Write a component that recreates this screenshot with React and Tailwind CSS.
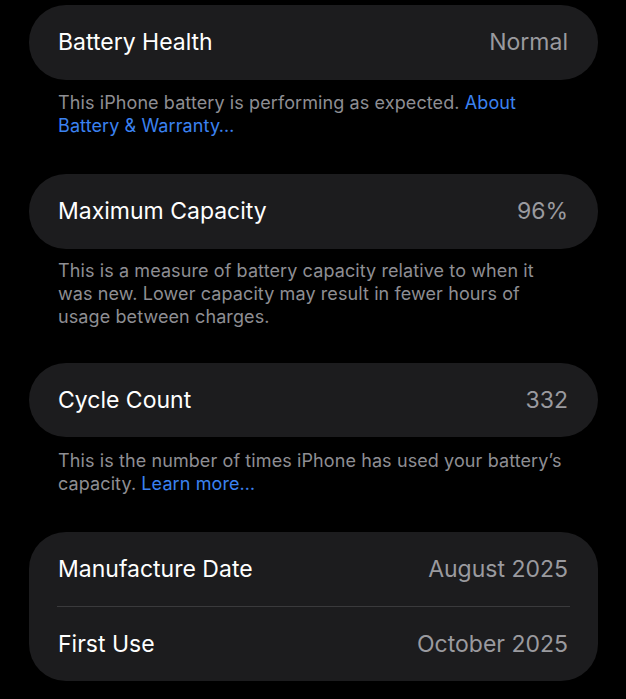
import React from "react";

const font = { fontFamily: "Inter, 'Noto Sans', sans-serif" };

function Row({ label, value, h = "h-[74px]" }) {
  return (
    <div className={`flex ${h} items-center justify-between pl-[29px] pr-[30px]`}>
      <span className="text-[23px] text-white tracking-[0px]">{label}</span>
      <span className="text-[23px] text-[#9a9a9f] tracking-[0px]">{value}</span>
    </div>
  );
}

function Card({ children }) {
  return <div className="rounded-[37px] bg-[#1c1c1e]">{children}</div>;
}

function Note({ children, mt, mb }) {
  return (
    <p className={`pl-[29px] pr-[30px] text-[18px] leading-[23px] text-[#8e8e93] tracking-[0.1px] ${mt} ${mb}`}>
      {children}
    </p>
  );
}

export default function App() {
  return (
    <div className="min-h-[699px] w-[626px] bg-black pl-[29px] pr-[28px] pt-[5px]" style={font}>
      <Card>
        <Row label="Battery Health" value="Normal" h="h-[75px]" />
      </Card>
      <Note mt="mt-[11px]" mb="mb-[37px]">
        This iPhone battery is performing as expected.{" "}
        <span className="text-[#3b82f0]">About Battery &amp; Warranty…</span>
      </Note>
      <Card>
        <Row label="Maximum Capacity" value="96%" h="h-[75px]" />
      </Card>
      <Note mt="mt-[10px]" mb="mb-[35px]">
        This is a measure of battery capacity relative to when it was new. Lower capacity may result in fewer hours of usage between charges.
      </Note>
      <Card>
        <Row label="Cycle Count" value="332" />
      </Card>
      <Note mt="mt-[12px]" mb="mb-[37px]">
        This is the number of times iPhone has used your battery’s capacity.{" "}
        <span className="text-[#3b82f0]">Learn more…</span>
      </Note>
      <Card>
        <Row label="Manufacture Date" value="August 2025" />
        <div className="mx-[28px] h-px bg-[#3a3a3c]" />
        <Row label="First Use" value="October 2025" />
      </Card>
    </div>
  );
}
